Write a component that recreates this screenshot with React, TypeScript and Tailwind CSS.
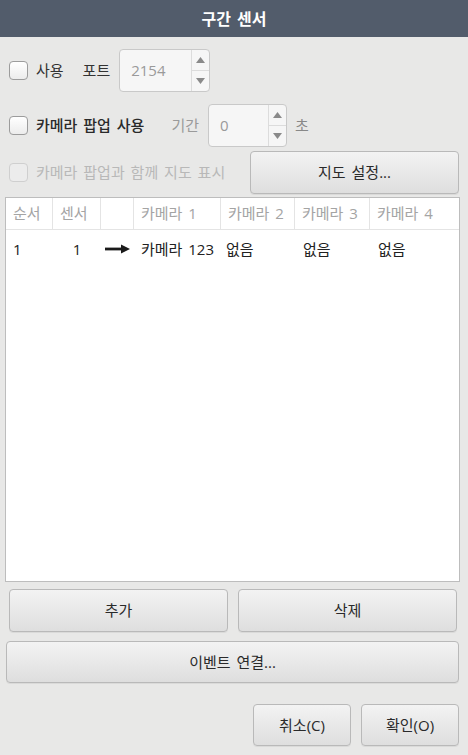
import React from 'react';

const FONT = { fontFamily: '"Open Sans", "Noto Sans CJK KR", sans-serif' };

function CheckBox({ disabled = false }: { disabled?: boolean }) {
    return (
        <div
            className={`w-[19px] h-[19px] rounded-[4px] border shrink-0 ${disabled
                ? 'border-[#cfcfcf] bg-[#ececec]'
                : 'border-[#9c9c9c] bg-gradient-to-b from-[#ffffff] to-[#ececec]'
                }`}
        />
    );
}

function SpinBox({ value, width }: { value: string; width: string }) {
    return (
        <div className={`${width} h-[43px] flex rounded-[4px] border border-[#c9c9c9] bg-[#f6f6f6]`}>
            <div className="flex-1 flex items-center pl-[11px] text-[15px] text-[#9a9a9a]">{value}</div>
            <div className="w-[18px] flex flex-col border-l border-[#dcdcdc]">
                <div className="flex-1 flex items-center justify-center border-b border-[#dcdcdc]">
                    <svg width="9" height="6" viewBox="0 0 9 6">
                        <path d="M0 6 L4.5 0 L9 6 Z" fill="#8a8a8a" />
                    </svg>
                </div>
                <div className="flex-1 flex items-center justify-center">
                    <svg width="9" height="6" viewBox="0 0 9 6">
                        <path d="M0 0 L4.5 6 L9 0 Z" fill="#8a8a8a" />
                    </svg>
                </div>
            </div>
        </div>
    );
}

function Button({ children, className = '' }: { children: React.ReactNode; className?: string }) {
    return (
        <div
            className={`flex items-center justify-center rounded-[4px] border border-[#b9b9b9] bg-gradient-to-b from-[#f3f3f3] to-[#dedede] text-[15px] text-[#2a2a2a] shadow-[0_1px_0_rgba(0,0,0,0.06)] ${className}`}
        >
            {children}
        </div>
    );
}

const COLUMNS = [
    { label: '순서', w: 'w-[47px]' },
    { label: '센서', w: 'w-[48px]' },
    { label: '', w: 'w-[33px]' },
    { label: '카메라 1', w: 'w-[87px]' },
    { label: '카메라 2', w: 'w-[74px]' },
    { label: '카메라 3', w: 'w-[75px]' },
    { label: '카메라 4', w: 'flex-1' },
];

export default function App() {
    return (
        <div className="w-[468px] h-[755px] bg-[#e8e8e7] flex flex-col overflow-hidden [word-spacing:2px]" style={FONT}>
            {/* Title */}
            <div className="h-[37px] shrink-0 bg-[#525c6b] flex items-center justify-center text-white text-[16px] font-bold">
                구간 센서
            </div>

            {/* Port row */}
            <div className="mt-[12px] h-[43px] flex items-center pl-[9px]">
                <CheckBox />
                <span className="ml-[8px] text-[15px] text-[#333]">사용</span>
                <span className="ml-[19px] text-[15px] text-[#333]">포트</span>
                <div className="ml-[9px]">
                    <SpinBox value="2154" width="w-[91px]" />
                </div>
            </div>

            {/* Camera popup row */}
            <div className="mt-[11px] h-[44px] flex items-center pl-[9px]">
                <CheckBox />
                <span className="ml-[8px] text-[15px] font-medium text-[#2a2a2a]">카메라 팝업 사용</span>
                <span className="ml-[27px] text-[15px] text-[#9a9a9a]">기간</span>
                <div className="ml-[9px]">
                    <SpinBox value="0" width="w-[79px]" />
                </div>
                <span className="ml-[8px] text-[15px] text-[#888]">초</span>
            </div>

            {/* Map row */}
            <div className="mt-[4px] h-[43px] flex items-center pl-[9px] pr-[9px]">
                <CheckBox disabled />
                <span className="ml-[8px] text-[15px] text-[#b8b8b8]">카메라 팝업과 함께 지도 표시</span>
                <Button className="ml-auto w-[209px] h-[43px]">지도 설정...</Button>
            </div>

            {/* Table */}
            <div className="mt-[3px] mx-[5px] w-[455px] h-[385px] bg-white border border-[#bdbdbd] flex flex-col">
                <div className="h-[32px] flex border-b border-[#e4e4e4]">
                    {COLUMNS.map((c, i) => (
                        <div
                            key={i}
                            className={`${c.w} flex items-center pl-[7px] text-[15px] text-[#a4a4a4] ${i < COLUMNS.length - 1 ? 'border-r border-[#e4e4e4]' : ''}`}
                        >
                            {c.label}
                        </div>
                    ))}
                </div>
                <div className="h-[38px] flex items-center text-[15px] text-[#222]">
                    <div className="w-[47px] pl-[7px]">1</div>
                    <div className="w-[48px] text-center">1</div>
                    <div className="w-[33px] flex items-center pl-[4px]">
                        <svg width="25" height="10" viewBox="0 0 25 10">
                            <path d="M0 5 H18" stroke="#1a1a1a" strokeWidth="2.8" />
                            <path d="M16 0.5 L25 5 L16 9.5 Z" fill="#1a1a1a" />
                        </svg>
                    </div>
                    <div className="w-[87px] pl-[7px] whitespace-nowrap">카메라 123</div>
                    <div className="w-[74px] pl-[5px]">없음</div>
                    <div className="w-[75px] pl-[8px]">없음</div>
                    <div className="flex-1 pl-[8px]">없음</div>
                </div>
            </div>

            {/* Add / Delete */}
            <div className="mt-[7px] pl-[9px] pr-[11px] flex gap-[10px] h-[43px]">
                <Button className="flex-1 h-full">추가</Button>
                <Button className="flex-1 h-full">삭제</Button>
            </div>

            {/* Event link */}
            <div className="mt-[9px] pl-[6px] pr-[9px] h-[42px]">
                <Button className="w-full h-full">이벤트 연결...</Button>
            </div>

            {/* Cancel / OK */}
            <div className="mt-[21px] pr-[9px] flex justify-end gap-[10px] h-[42px]">
                <Button className="w-[98px] h-full">취소(C)</Button>
                <Button className="w-[98px] h-full">확인(O)</Button>
            </div>
        </div>
    );
}
